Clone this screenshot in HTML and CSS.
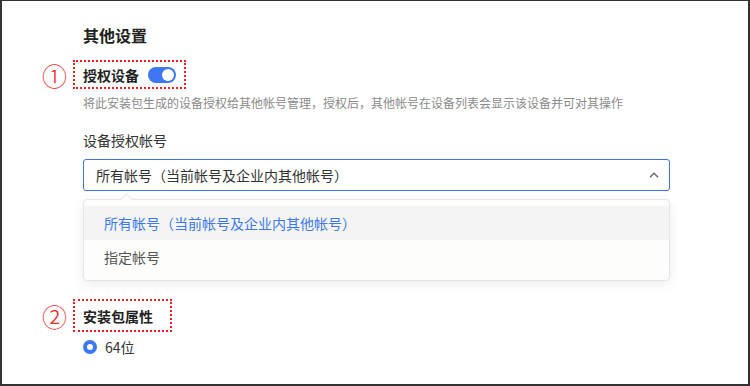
FILE: index.html
```html
<!DOCTYPE html>
<html lang="zh-CN">
<head>
  <meta charset="UTF-8">
  <meta name="viewport" content="width=device-width, initial-scale=1.0">
  <title>其他设置</title>
  <link rel="stylesheet" href="styles.css">
</head>
<body>

<div class="frame">
  <h2 class="titulo">其他设置</h2>

  <div class="marca" data-num="①">
    <span class="rotulo">授权设备</span>
    <span class="chave ligada"></span>
  </div>
  <p class="descricao">将此安装包生成的设备授权给其他帐号管理，授权后，其他帐号在设备列表会显示该设备并可对其操作</p>

  <p class="campo">设备授权帐号</p>
  <div class="seletor">
    <span>所有帐号（当前帐号及企业内其他帐号）</span>
    <svg class="seta" width="10" height="6" viewBox="0 0 10 6">
      <path d="M1 5.2 L5 1.2 L9 5.2" fill="none" stroke="#666" stroke-width="1.3"/>
    </svg>
  </div>
  <ul class="menu">
    <li class="item ativo">所有帐号（当前帐号及企业内其他帐号）</li>
    <li class="item">指定帐号</li>
  </ul>

  <div class="marca marca-2" data-num="②">
    <span class="rotulo">安装包属性</span>
  </div>
  <label class="radio-linha">
    <span class="radio"></span>
    <span>64位</span>
  </label>
</div>

</body>
</html>
```

FILE: styles.css
```css
    body {
      margin: 0;
      padding: 0;
      background: #fff;
      font-family: "Noto Sans CJK SC", "Liberation Sans", sans-serif;
      color: #333;
    }

    .frame {
      box-sizing: border-box;
      width: 750px;
      height: 386px;
      border: 2px solid #333;
      border-top-width: 1px;
      padding: 22px 0 0 81px;
      overflow: hidden;
    }

    .titulo {
      margin: 0;
      font-size: 16px;
      line-height: 24px;
      font-weight: 600;
      color: #222;
    }

    /* caixa pontilhada vermelha com numero */
    .marca {
      position: relative;
      display: inline-flex;
      align-items: center;
      gap: 9px;
      height: 25px;
      margin: 13px 0 0 -10px;
      padding: 0 8px;
      border: 2px dotted #f41c1c;
    }

    .marca::before {
      content: attr(data-num);
      position: absolute;
      left: -33px;
      top: 50%;
      transform: translateY(-50%);
      font-size: 25px;
      line-height: 25px;
      color: #f52525;
      font-weight: 300;
    }

    .marca-2 {
      height: 29px;
      margin-top: 18px;
      padding-right: 17px;
    }

    .rotulo {
      font-size: 14px;
      font-weight: 700;
      color: #222;
    }

    .chave {
      position: relative;
      display: inline-block;
      width: 28px;
      height: 16px;
      border-radius: 8px;
      background: #c8c8c8;
    }

    .chave::after {
      content: '';
      position: absolute;
      top: 2px;
      left: 2px;
      width: 12px;
      height: 12px;
      border-radius: 50%;
      background: #fff;
    }

    .chave.ligada {
      background: #3d78f2;
    }

    .chave.ligada::after {
      left: 14px;
    }

    .descricao {
      margin: 5px 0 0;
      font-size: 12px;
      line-height: 18px;
      color: #8a8a8a;
    }

    .campo {
      margin: 18px 0 0;
      font-size: 14px;
      line-height: 20px;
      color: #333;
    }

    .seletor {
      box-sizing: border-box;
      display: flex;
      align-items: center;
      justify-content: space-between;
      width: 587px;
      height: 32px;
      margin-top: 9px;
      padding: 0 10px 0 12px;
      border: 1px solid #3b74ea;
      border-radius: 3px;
      font-size: 14px;
      color: #333;
    }

    .menu {
      position: relative;
      box-sizing: border-box;
      width: 587px;
      margin: 8px 0 0;
      padding: 6px 0;
      list-style: none;
      background: #fdfdfb;
      border: 1px solid #e6e6e6;
      border-radius: 4px;
      box-shadow: 0 3px 12px rgba(0, 0, 0, 0.08);
    }

    .menu::before {
      content: '';
      position: absolute;
      top: -5px;
      left: 38px;
      width: 8px;
      height: 8px;
      background: #fdfdfb;
      border-top: 1px solid #e6e6e6;
      border-left: 1px solid #e6e6e6;
      transform: rotate(45deg);
    }

    .item {
      height: 34px;
      line-height: 34px;
      padding-left: 20px;
      font-size: 14px;
      color: #555;
    }

    .item.ativo {
      background: #f4f4f4;
      color: #3d78f2;
    }

    .radio-linha {
      display: flex;
      align-items: center;
      gap: 8px;
      margin-top: 5px;
      height: 20px;
      font-size: 14px;
      color: #333;
    }

    .radio {
      box-sizing: border-box;
      width: 14px;
      height: 14px;
      border-radius: 50%;
      border: 4.5px solid #3d78f2;
      background: #fff;
    }
```
